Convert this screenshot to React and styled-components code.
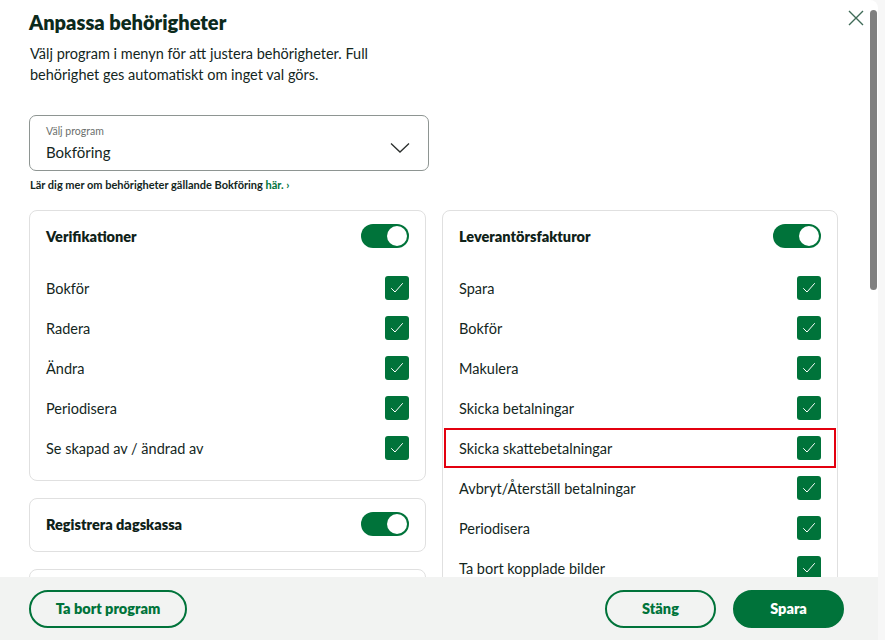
import React from 'react';
import styled, { createGlobalStyle } from 'styled-components';

const GREEN = '#00733a';
const INK = '#13261d';

const GlobalStyle = createGlobalStyle`
  html, body {
    margin: 0;
    padding: 0;
    background: #f7f7f7;
    font-family: Lato, 'Noto Sans', sans-serif;
    color: ${INK};
  }
  * { box-sizing: border-box; }
`;

const Modal = styled.div`
  position: relative;
  width: 878px;
  height: 640px;
  background: #fff;
  border-top-right-radius: 8px;
  display: flex;
  flex-direction: column;
  overflow: hidden;
`;

const ScrollArea = styled.div`
  flex: 1;
  overflow: hidden;
`;

// headless browser hides native scrollbars, so the thumb is drawn on top
const ScrollThumb = styled.div`
  position: absolute;
  top: 10px;
  right: 1px;
  width: 7px;
  height: 280px;
  border-radius: 4px;
  background: #808080;
`;

const Content = styled.div`
  padding: 9px 41px 24px 29px;
`;

const CloseButton = styled.button`
  position: absolute;
  top: 9px;
  right: 13px;
  width: 18px;
  height: 18px;
  padding: 0;
  border: none;
  background: none;
  cursor: pointer;
`;

const Title = styled.h1`
  margin: 0;
  font-size: 20px;
  line-height: 26px;
  font-weight: 800;
  color: #0c2a1c;
`;

const Description = styled.p`
  margin: 8px 0 0 1px;
  max-width: 370px;
  font-size: 14.5px;
  line-height: 21px;
  color: ${INK};
`;

const SelectBox = styled.div`
  margin-top: 30px;
  width: 400px;
  height: 56px;
  border: 1px solid #8e9592;
  border-radius: 7px;
  padding: 9px 18px 0 16px;
  display: flex;
  align-items: center;
  justify-content: space-between;
  cursor: pointer;
`;

const SelectText = styled.div`
  display: flex;
  flex-direction: column;
  align-self: flex-start;
`;

const SelectLabel = styled.span`
  font-size: 10.5px;
  line-height: 13px;
  color: #6b6f6d;
`;

const SelectValue = styled.span`
  margin-top: 4px;
  font-size: 15px;
  line-height: 20px;
  color: ${INK};
`;

const LearnMore = styled.p`
  margin: 7px 0 0 1px;
  font-size: 11px;
  font-weight: 700;
  line-height: 14px;
  color: ${INK};
`;

const LinkPart = styled.span`
  color: ${GREEN};
`;

const Columns = styled.div`
  margin-top: 18px;
  display: grid;
  grid-template-columns: 397px 396px;
  column-gap: 16px;
  align-items: start;
`;

const Column = styled.div`
  display: flex;
  flex-direction: column;
  gap: 17px;
`;

const Card = styled.section`
  border: 1px solid #e0e0e0;
  border-radius: 8px;
  padding: 1px 0 3px;
  background: #fff;
`;

const CardHeader = styled.div`
  height: 48px;
  padding: 0 16px;
  display: flex;
  align-items: center;
  justify-content: space-between;
`;

const CardTitle = styled.h2`
  margin: 0;
  font-size: 14.5px;
  font-weight: 800;
  color: #0f2219;
`;

const Rows = styled.div`
  margin-top: 8px;
  padding-bottom: 9px;
  display: flex;
  flex-direction: column;
`;

const Row = styled.label`
  height: 40px;
  margin: 0 1px;
  padding: 0 15px;
  display: flex;
  align-items: center;
  justify-content: space-between;
  font-size: 14.5px;
  color: ${INK};
  outline: ${p => (p.$highlight ? '2px solid #e3000f' : 'none')};
  outline-offset: -2px;
`;

const Track = styled.span`
  width: 48px;
  height: 24px;
  border-radius: 12px;
  background: ${p => (p.$on ? GREEN : '#b9bdbb')};
  display: flex;
  align-items: center;
  justify-content: ${p => (p.$on ? 'flex-end' : 'flex-start')};
  padding: 2px;
`;

const Knob = styled.span`
  width: 20px;
  height: 20px;
  border-radius: 50%;
  background: #fff;
`;

const Check = styled.span`
  width: 24px;
  height: 24px;
  border-radius: 3px;
  background: ${GREEN};
  display: flex;
  align-items: center;
  justify-content: center;
`;

const Footer = styled.footer`
  height: 63px;
  flex-shrink: 0;
  background: #f2f3f2;
  padding: 0 34px 0 29px;
  display: flex;
  align-items: center;
  justify-content: space-between;
`;

const ButtonGroup = styled.div`
  display: flex;
  gap: 17px;
`;

const Button = styled.button`
  height: 38px;
  min-width: ${p => p.$width || 111}px;
  padding: 0 24px;
  border-radius: 19px;
  border: 2px solid ${GREEN};
  background: ${p => (p.$primary ? GREEN : 'transparent')};
  color: ${p => (p.$primary ? '#fff' : GREEN)};
  font-family: inherit;
  font-size: 14.5px;
  font-weight: 800;
  cursor: pointer;
`;

const Toggle = ({ on = true }) => (
  <Track $on={on}>
    <Knob />
  </Track>
);

const Checkbox = () => (
  <Check>
    <svg width="16" height="16" viewBox="0 0 16 16" fill="none">
      <path d="M2.5 8.5 L6 12 L13.5 3.5" stroke="#fff" strokeWidth="1" strokeLinecap="round" strokeLinejoin="round" />
    </svg>
  </Check>
);

const leftCards = [
  {
    title: 'Verifikationer',
    rows: ['Bokför', 'Radera', 'Ändra', 'Periodisera', 'Se skapad av / ändrad av'],
  },
  { title: 'Registrera dagskassa', rows: [] },
  { title: 'Kundfakturor', rows: ['Bokför', 'Makulera'] },
];

const supplierRows = [
  'Spara',
  'Bokför',
  'Makulera',
  'Skicka betalningar',
  'Skicka skattebetalningar',
  'Avbryt/Återställ betalningar',
  'Periodisera',
  'Ta bort kopplade bilder',
];

const PermissionCard = ({ title, rows, highlight }) => (
  <Card>
    <CardHeader>
      <CardTitle>{title}</CardTitle>
      <Toggle />
    </CardHeader>
    {rows.length > 0 && (
      <Rows>
        {rows.map(r => (
          <Row key={r} $highlight={r === highlight}>
            {r}
            <Checkbox />
          </Row>
        ))}
      </Rows>
    )}
  </Card>
);

export default function App() {
  return (
    <>
      <GlobalStyle />
      <Modal>
        <ScrollArea>
          <Content>
            <Title>Anpassa behörigheter</Title>
            <Description>
              Välj program i menyn för att justera behörigheter. Full behörighet ges automatiskt om inget val görs.
            </Description>

            <SelectBox>
              <SelectText>
                <SelectLabel>Välj program</SelectLabel>
                <SelectValue>Bokföring</SelectValue>
              </SelectText>
              <svg width="20" height="12" viewBox="0 0 20 12" fill="none">
                <path d="M1 1.5 L10 10 L19 1.5" stroke="#2b2f2d" strokeWidth="1.3" />
              </svg>
            </SelectBox>

            <LearnMore>
              Lär dig mer om behörigheter gällande Bokföring <LinkPart>här. ›</LinkPart>
            </LearnMore>

            <Columns>
              <Column>
                {leftCards.map(c => (
                  <PermissionCard key={c.title} title={c.title} rows={c.rows} />
                ))}
              </Column>
              <Column>
                <PermissionCard
                  title="Leverantörsfakturor"
                  rows={supplierRows}
                  highlight="Skicka skattebetalningar"
                />
              </Column>
            </Columns>
          </Content>
        </ScrollArea>

        <ScrollThumb />

        <CloseButton aria-label="Stäng">
          <svg width="18" height="18" viewBox="0 0 18 18" fill="none">
            <path d="M2 2 L16 16 M16 2 L2 16" stroke="#3f6a57" strokeWidth="1.4" />
          </svg>
        </CloseButton>

        <Footer>
          <Button $width={158}>Ta bort program</Button>
          <ButtonGroup>
            <Button>Stäng</Button>
            <Button $primary>Spara</Button>
          </ButtonGroup>
        </Footer>
      </Modal>
    </>
  );
}
